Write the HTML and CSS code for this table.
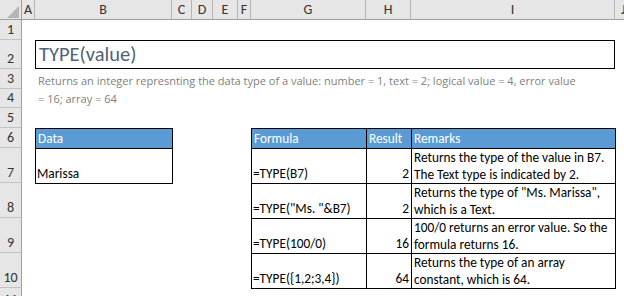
FILE: index.html
```html
<!DOCTYPE html>
<html>
<head>
<meta charset="utf-8">
<link rel="stylesheet" href="styles.css">
</head>
<body>
<div class="sheet">
  <div class="corner"><svg width="22" height="20" viewBox="0 0 22 20"><polygon points="19,6 19,18 7,18" fill="#b4b4b4"/></svg></div>
  <div class="ch">A</div>
  <div class="ch">B</div>
  <div class="ch">C</div>
  <div class="ch">D</div>
  <div class="ch">E</div>
  <div class="ch">F</div>
  <div class="ch">G</div>
  <div class="ch">H</div>
  <div class="ch">I</div>
  <div class="ch ch-j">J</div>

  <div class="rh">1</div>
  <div class="rh">2</div>
  <div class="rh">3</div>
  <div class="rh">4</div>
  <div class="rh">5</div>
  <div class="rh">6</div>
  <div class="rh">7</div>
  <div class="rh">8</div>
  <div class="rh">9</div>
  <div class="rh">10</div>
  <div class="rh rh-last">11</div>

  <div class="title">TYPE(value)</div>
  <div class="desc">Returns an integer represnting the data type of a value: number = 1, text = 2; logical value = 4, error value<br>= 16; array = 64</div>

  <div class="tbl data-tbl">
    <div class="th">Data</div>
    <div class="td">Marissa</div>
  </div>

  <div class="tbl formula-tbl">
    <div class="th">Formula</div>
    <div class="th">Result</div>
    <div class="th">Remarks</div>

    <div class="td">=TYPE(B7)</div>
    <div class="td num">2</div>
    <div class="td rem">Returns the type of the value in B7.<br>The Text type is indicated by 2.</div>

    <div class="td">=TYPE("Ms. "&amp;B7)</div>
    <div class="td num">2</div>
    <div class="td rem">Returns the type of "Ms. Marissa",<br>which is a Text.</div>

    <div class="td">=TYPE(100/0)</div>
    <div class="td num">16</div>
    <div class="td rem">100/0 returns an error value. So the<br>formula returns 16.</div>

    <div class="td">=TYPE({1,2;3,4})</div>
    <div class="td num">64</div>
    <div class="td rem">Returns the type of an array<br>constant, which is 64.</div>
  </div>
</div>
</body>
</html>
```
FILE: styles.css
```css
html, body {
  margin: 0;
  padding: 0;
  background: #ffffff;
}
body {
  width: 624px;
  height: 296px;
  overflow: hidden;
  font-family: Calibri, Carlito, Lato, "Liberation Sans", sans-serif;
  font-size: 13.3px;
  color: #000;
}
.sheet {
  display: grid;
  grid-template-columns: 22px 13px 137px 20px 21px 25px 13px 115px 45px 204px 9px;
  grid-template-rows: 20px 20px 29px 20px 19px 20px 20px 35px 35px 35px 35px 8px;
  width: 624px;
  height: 296px;
  overflow: hidden;
}
.corner {
  background: #e6e6e6;
  border-right: 1px solid #9e9e9e;
  border-bottom: 1px solid #9e9e9e;
  box-sizing: border-box;
  overflow: hidden;
}
.corner svg { display: block; }
.ch {
  background: #e6e6e6;
  border-right: 1px solid #b4b4b4;
  border-bottom: 1px solid #9e9e9e;
  box-sizing: border-box;
  display: flex;
  align-items: center;
  justify-content: center;
  color: #333;
  font-size: 14px;
  line-height: 19px;
  overflow: hidden;
}
.ch-j {
  justify-content: flex-start;
  padding-left: 6px;
  border-right: none;
}
.rh {
  grid-column: 1;
  background: #e6e6e6;
  border-right: 1px solid #9e9e9e;
  border-bottom: 1px solid #c3c3c3;
  box-sizing: border-box;
  display: flex;
  align-items: flex-end;
  justify-content: center;
  color: #333;
  font-size: 14px;
  line-height: 17px;
  padding-bottom: 1px;
  overflow: hidden;
}
.rh-last {
  align-items: flex-start;
  padding-top: 3px;
  border-bottom: none;
}
.title {
  grid-column: 3 / 11;
  grid-row: 3;
  border: 1px solid #000;
  box-sizing: border-box;
  display: flex;
  align-items: flex-end;
  padding: 0 0 2px 3px;
  font-family: "Calibri Light", Carlito, Lato, sans-serif;
  font-weight: 300;
  font-size: 20.5px;
  line-height: 24px;
  color: #51627a;
  white-space: nowrap;
}
.desc {
  grid-column: 3 / 11;
  grid-row: 4 / 6;
  padding: 3px 0 0 3px;
  font-family: "Segoe UI", "Open Sans", sans-serif;
  font-size: 11px;
  line-height: 18px;
  color: #808080;
  white-space: nowrap;
}
.tbl {
  display: grid;
  background: #000;
  padding: 1px;
  gap: 1px;
  align-self: start;
  justify-self: start;
}
.data-tbl {
  grid-column: 3;
  grid-row: 7 / 9;
  grid-template-columns: 136px;
  grid-template-rows: 19px 34px;
}
.formula-tbl {
  grid-column: 8 / 11;
  grid-row: 7 / 12;
  grid-template-columns: 114px 44px 203px;
  grid-template-rows: 19px 34px 34px 34px 34px;
}
.th {
  background: #5b9bd5;
  color: #fff;
  padding: 0 0 0 2px;
  line-height: 20px;
  white-space: nowrap;
  overflow: hidden;
}
.td {
  background: #fff;
  display: flex;
  align-items: flex-end;
  padding: 0 0 1px 1px;
  line-height: 17px;
  white-space: nowrap;
  overflow: hidden;
}
.td.num {
  justify-content: flex-end;
  padding-right: 2px;
}
.td.rem {
  padding-left: 2px;
  padding-bottom: 0;
}
```
